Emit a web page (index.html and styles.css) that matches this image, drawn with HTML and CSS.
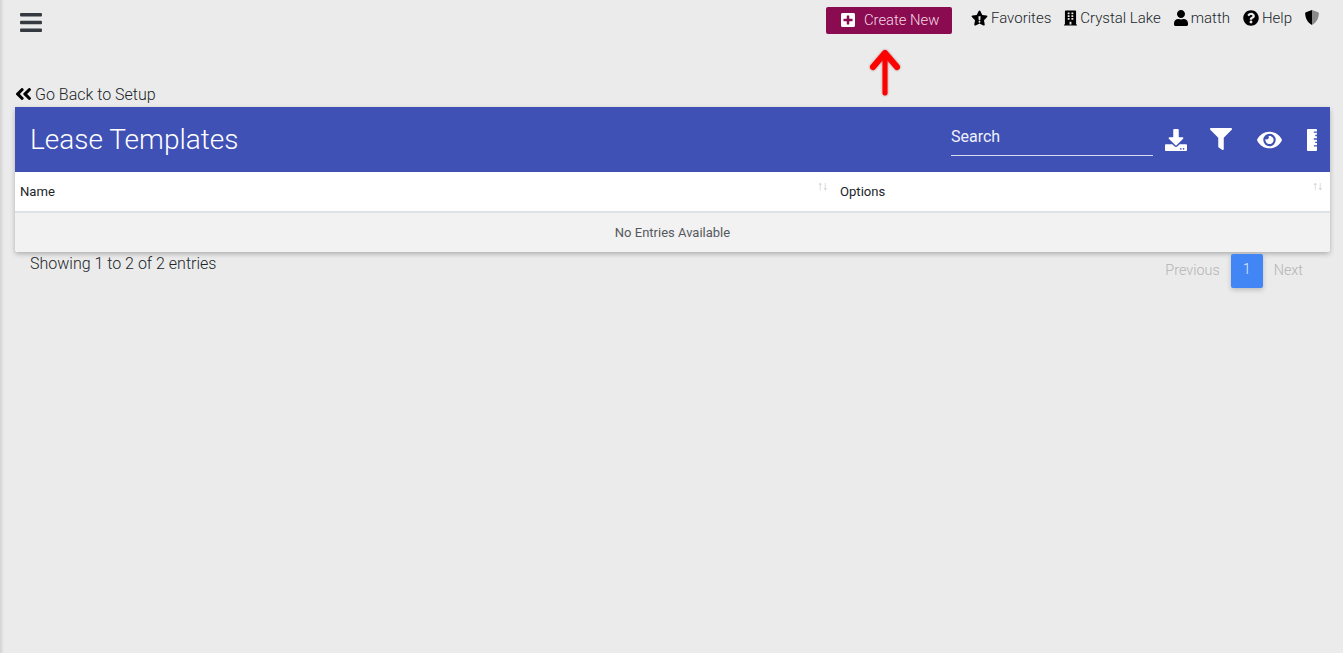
FILE: index.html
```html
<!DOCTYPE html>
<html lang="en">
<head>
<meta charset="utf-8">
<title>Lease Templates</title>
<link rel="stylesheet" href="styles.css">
</head>
<body>
<div class="page">
  <header class="topbar">
    <svg class="menu-icon" viewBox="0 0 448 512"><path d="M16 132h416c8.837 0 16-7.163 16-16V76c0-8.837-7.163-16-16-16H16C7.163 60 0 67.163 0 76v40c0 8.837 7.163 16 16 16zm0 160h416c8.837 0 16-7.163 16-16v-40c0-8.837-7.163-16-16-16H16c-8.837 0-16 7.163-16 16v40c0 8.837 7.163 16 16 16zm0 160h416c8.837 0 16-7.163 16-16v-40c0-8.837-7.163-16-16-16H16c-8.837 0-16 7.163-16 16v40c0 8.837 7.163 16 16 16z"/></svg>
    <a class="create-btn">
      <svg class="create-icon" viewBox="0 0 448 512"><path d="M400 32H48C21.5 32 0 53.5 0 80v352c0 26.5 21.5 48 48 48h352c26.5 0 48-21.5 48-48V80c0-26.5-21.5-48-48-48zm-32 252c0 6.6-5.4 12-12 12h-92v92c0 6.6-5.4 12-12 12h-56c-6.6 0-12-5.4-12-12v-92H92c-6.6 0-12-5.4-12-12v-56c0-6.6 5.4-12 12-12h92v-92c0-6.6 5.4-12 12-12h56c6.6 0 12 5.4 12 12v92h92c6.6 0 12 5.4 12 12v56z"/></svg>
      <span>Create New</span>
    </a>
    <nav class="usernav">
      <a class="nav-item"><svg class="nav-icon star" viewBox="0 0 576 512"><path fill-rule="evenodd" d="M259.3 17.8L194 150.2 47.9 171.5c-26.2 3.8-36.7 36.1-17.7 54.6l105.7 103-25 145.5c-4.5 26.3 23.2 46 46.4 33.7L288 439.6l130.7 68.7c23.2 12.2 50.9-7.4 46.4-33.7l-25-145.5 105.7-103c19-18.5 8.5-50.8-17.7-54.6L382 150.2 316.7 17.8c-11.7-23.6-45.6-23.9-57.4 0zM250 200h76l-12 130h-52zM288 350a32 32 0 1 1 0 64 32 32 0 0 1 0-64z"/></svg>Favorites</a>
      <a class="nav-item"><svg class="nav-icon building" viewBox="0 0 448 512"><path d="M436 480h-20V24c0-13.255-10.745-24-24-24H56C42.745 0 32 10.745 32 24v456H12c-6.627 0-12 5.373-12 12v20h448v-20c0-6.627-5.373-12-12-12zM128 76c0-6.627 5.373-12 12-12h40c6.627 0 12 5.373 12 12v40c0 6.627-5.373 12-12 12h-40c-6.627 0-12-5.373-12-12V76zm0 96c0-6.627 5.373-12 12-12h40c6.627 0 12 5.373 12 12v40c0 6.627-5.373 12-12 12h-40c-6.627 0-12-5.373-12-12v-40zm52 148h-40c-6.627 0-12-5.373-12-12v-40c0-6.627 5.373-12 12-12h40c6.627 0 12 5.373 12 12v40c0 6.627-5.373 12-12 12zm76 160h-64v-84c0-6.627 5.373-12 12-12h40c6.627 0 12 5.373 12 12v84zm64-172c0 6.627-5.373 12-12 12h-40c-6.627 0-12-5.373-12-12v-40c0-6.627 5.373-12 12-12h40c6.627 0 12 5.373 12 12v40zm0-96c0 6.627-5.373 12-12 12h-40c-6.627 0-12-5.373-12-12v-40c0-6.627 5.373-12 12-12h40c6.627 0 12 5.373 12 12v40zm0-96c0 6.627-5.373 12-12 12h-40c-6.627 0-12-5.373-12-12V76c0-6.627 5.373-12 12-12h40c6.627 0 12 5.373 12 12v40z"/></svg>Crystal Lake</a>
      <a class="nav-item"><svg class="nav-icon user" viewBox="0 0 448 512"><path d="M224 256c70.7 0 128-57.3 128-128S294.7 0 224 0 96 57.3 96 128s57.3 128 128 128zm89.6 32h-16.7c-22.2 10.2-46.9 16-72.9 16s-50.6-5.8-72.9-16h-16.7C60.2 288 0 348.2 0 422.4V464c0 26.5 21.5 48 48 48h352c26.5 0 48-21.5 48-48v-41.6c0-74.2-60.2-134.4-134.4-134.4z"/></svg>matth</a>
      <a class="nav-item"><svg class="nav-icon help" viewBox="0 0 512 512"><path d="M504 256c0 136.997-111.043 248-248 248S8 392.997 8 256C8 119.083 119.043 8 256 8s248 111.083 248 248zM262.655 90c-54.497 0-89.255 22.957-116.549 63.758-3.536 5.286-2.353 12.415 2.715 16.258l34.699 26.31c5.205 3.947 12.621 3.008 16.665-2.122 17.864-22.658 30.113-35.797 57.303-35.797 20.429 0 45.698 13.148 45.698 32.958 0 14.976-12.363 22.667-32.534 33.976C247.128 238.528 216 254.941 216 296v4c0 6.627 5.373 12 12 12h56c6.627 0 12-5.373 12-12v-1.333c0-28.462 83.186-29.647 83.186-106.667 0-58.002-60.165-102-116.531-102zM256 338c-25.365 0-46 20.635-46 46 0 25.364 20.635 46 46 46s46-20.636 46-46c0-25.365-20.635-46-46-46z"/></svg>Help</a>
      <svg class="nav-icon shield" viewBox="0 0 512 512"><path fill="#8a8a8a" d="M256 0 466 80c14 6 22 18 22 32 0 180-90 330-232 400z"/><path fill="#000" d="M256 0 46 80c-14 6-22 18-22 32 0 180 90 330 232 400z"/></svg>
    </nav>
  </header>

  <a class="back-link"><svg class="back-icon" viewBox="0 0 448 512"><path d="M223.7 239l136-136c9.4-9.4 24.6-9.4 33.9 0l22.6 22.6c9.4 9.4 9.4 24.6 0 33.9L319.9 256l96.4 96.4c9.4 9.4 9.4 24.6 0 33.9L393.7 409c-9.4 9.4-24.6 9.4-33.9 0l-136-136c-9.5-9.4-9.5-24.6-.1-34zm-192 34l136 136c9.4 9.4 24.6 9.4 33.9 0l22.6-22.6c9.4-9.4 9.4-24.6 0-33.9L127.9 256l96.4-96.4c9.4-9.4 9.4-24.6 0-33.9L201.7 103c-9.4-9.4-24.6-9.4-33.9 0l-136 136c-9.5 9.4-9.5 24.6-.1 34z"/></svg>Go Back to Setup</a>

  <section class="card">
    <div class="card-head">
      <h1 class="card-title">Lease Templates</h1>
      <div class="search">Search</div>
      <div class="tools">
        <svg class="tool tool-download" viewBox="0 0 512 512"><path d="M216 0h80c13.3 0 24 10.7 24 24v168h87.7c17.8 0 26.7 21.5 14.1 34.1L269.7 378.3c-7.5 7.5-19.8 7.5-27.3 0L90.1 226.1c-12.6-12.6-3.7-34.1 14.1-34.1H192V24c0-13.3 10.7-24 24-24zm296 376v112c0 13.3-10.7 24-24 24H24c-13.3 0-24-10.7-24-24V376c0-13.3 10.7-24 24-24h146.7l49 49c20.1 20.1 52.5 20.1 72.6 0l49-49H488c13.3 0 24 10.7 24 24zm-124 88c0-11-9-20-20-20s-20 9-20 20 9 20 20 20 20-9 20-20zm64 0c0-11-9-20-20-20s-20 9-20 20 9 20 20 20 20-9 20-20z"/></svg>
        <svg class="tool tool-filter" viewBox="0 0 512 512"><path d="M487.976 0H24.028C2.71 0-8.047 25.866 7.058 40.971L192 225.941V432c0 7.831 3.821 15.171 10.237 19.662l80 55.98C298.02 518.69 320 507.493 320 487.98V225.941l184.947-184.97C520.021 25.896 509.338 0 487.976 0z"/></svg>
        <svg class="tool tool-eye" viewBox="0 0 576 512"><path d="M572.52 241.4C518.29 135.59 410.93 64 288 64S57.68 135.64 3.48 241.41a32.35 32.35 0 0 0 0 29.19C57.71 376.41 165.07 448 288 448s230.32-71.64 284.52-177.41a32.35 32.35 0 0 0 0-29.19zM288 400a144 144 0 1 1 144-144 143.93 143.93 0 0 1-144 144zm0-240a95.31 95.31 0 0 0-25.31 3.79 47.85 47.85 0 0 1-66.9 66.9A95.78 95.78 0 1 0 288 160z"/></svg>
        <svg class="tool tool-ruler" viewBox="0 0 256 512"><path d="M24 0h184c13 0 24 11 24 24v32h-72v32h72v48h-40v32h40v48h-72v32h72v48h-40v32h40v48h-72v32h72v80c0 13-11 24-24 24H24c-13 0-24-11-24-24V24C0 11 11 0 24 0z"/></svg>
      </div>
    </div>
    <div class="table-wrap">
      <div class="thead">
        <div class="th th-name">Name<span class="sort">↑↓</span></div>
        <div class="th th-options">Options<span class="sort">↑↓</span></div>
      </div>
      <div class="empty">No Entries Available</div>
    </div>
  </section>

  <div class="table-foot">
    <span class="info">Showing 1 to 2 of 2 entries</span>
    <div class="pager">
      <span class="page-link">Previous</span>
      <span class="page-current">1</span>
      <span class="page-link">Next</span>
    </div>
  </div>

  <svg class="red-arrow" viewBox="0 0 34 50"><path class="arrow-shaft" d="M17 46V6"/><path d="M5 20 17 6 29 20"/></svg>
</div>
</body>
</html>
```
FILE: styles.css
```css
* { box-sizing: border-box; }
html, body { margin: 0; height: 100%; }
body {
  background: #ebebeb;
  font-family: Roboto, "Liberation Sans", sans-serif;
  font-weight: 300;
  color: #212529;
  overflow: hidden;
}
.page {
  position: relative;
  height: 653px;
  padding: 0 13px 0 15px;
}
.page::before {
  content: "";
  position: absolute;
  left: 0;
  top: 0;
  bottom: 0;
  width: 4px;
  background: linear-gradient(to right, #d2d2d2, #ebebeb);
}
.topbar {
  display: flex;
  align-items: flex-start;
  height: 82px;
}
.menu-icon { width: 22px; height: 25px; margin: 10px 0 0 5px; fill: #343a40; }
.create-btn {
  display: flex;
  align-items: center;
  width: 126px;
  height: 27px;
  margin: 7px 0 0 784px;
  padding: 0 0 2px 15px;
  background: #8b0b50;
  border-radius: 2px;
  color: #f3d9e6;
  font-size: 14.8px;
}
.create-icon { width: 14px; height: 16px; margin-right: 9px; fill: #fff; }
.usernav {
  display: flex;
  align-items: center;
  height: 16px;
  margin: 10px 0 0 19px;
  font-size: 15px;
  line-height: 16px;
  white-space: nowrap;
}
.nav-item { display: flex; align-items: center; margin-right: 13px; }
.nav-icon { height: 16px; margin-right: 3px; fill: #000; flex: none; }
.star { width: 17px; }
.building { width: 13px; }
.user { width: 14px; }
.help { width: 16px; }
.shield { width: 16px; height: 15px; margin: -1px 0 0 -1px; }
.back-link {
  display: flex;
  align-items: center;
  height: 24px;
  margin-bottom: 1px;
  font-size: 16px;
  color: #212529;
}
.back-icon { width: 17px; height: 20px; margin-right: 3px; fill: #000; }
.card {
  width: 1315px;
  border-radius: 3px;
  box-shadow: 0 2px 5px rgba(0, 0, 0, .26);
}
.card-head {
  display: flex;
  align-items: center;
  height: 65px;
  padding: 0 12px 0 15px;
  background: #3f51b5;
  color: #fff;
}
.card-title { flex: 1; margin: 0; font-size: 28px; font-weight: 300; }
.search {
  width: 202px;
  height: 33px;
  margin-top: -1px;
  padding-top: 4px;
  border-bottom: 1px solid #d7dbf0;
  font-size: 16px;
  font-weight: 400;
  color: #f0f2fb;
}
.tools { display: flex; align-items: flex-start; margin-left: 12px; height: 24px; }
.tool { fill: #fff; flex: none; }
.tool-download { width: 22px; height: 22px; margin-top: 1.5px; }
.tool-filter { width: 22px; height: 22px; margin: 0 0 0 23px; }
.tool-eye { width: 25px; height: 22px; margin: 1px 0 0 25px; }
.tool-ruler { width: 11px; height: 22px; margin: 1px 0 0 25px; }
.table-wrap { background: #fff; border-radius: 0 0 3px 3px; overflow: hidden; }
.thead { display: grid; grid-template-columns: 820px 1fr; height: 41px; border-bottom: 2px solid #dee2e6; }
.th { position: relative; padding: 12px 5px 0; font-size: 13.1px; line-height: 15px; font-weight: 400; color: #212529; }
.sort { position: absolute; right: 8px; top: 7px; font-size: 12px; letter-spacing: -1px; color: #c4c4c4; }
.empty {
  height: 39px;
  background: #f2f2f2;
  text-align: center;
  font-size: 13px;
  font-weight: 400;
  line-height: 39px;
  color: #55595e;
}
.table-foot { display: flex; justify-content: space-between; width: 1315px; padding: 2px 12px 0 15px; }
.info { font-size: 16px; line-height: 19px; }
.pager { display: flex; align-items: center; font-size: 14.4px; color: #b4b4b4; }
.page-link { padding: 0 11px 0 0; line-height: 34px; }
.page-link:last-child { padding: 0 15px 0 11px; }
.page-current {
  width: 32px;
  height: 34px;
  background: #4285f4;
  border-radius: 2px;
  color: #e4edff;
  text-align: center;
  line-height: 32px;
  font-size: 14.4px;
  box-shadow: 0 2px 5px rgba(0, 0, 0, .2);
}
.red-arrow {
  position: absolute;
  left: 868px;
  top: 47px;
  width: 34px;
  height: 50px;
  fill: none;
  stroke: #f00;
  stroke-width: 6;
  stroke-linecap: round;
  stroke-linejoin: round;
  filter: drop-shadow(0 0 1px rgba(120, 0, 0, .5));
}
.arrow-shaft { stroke-width: 5; }
```
